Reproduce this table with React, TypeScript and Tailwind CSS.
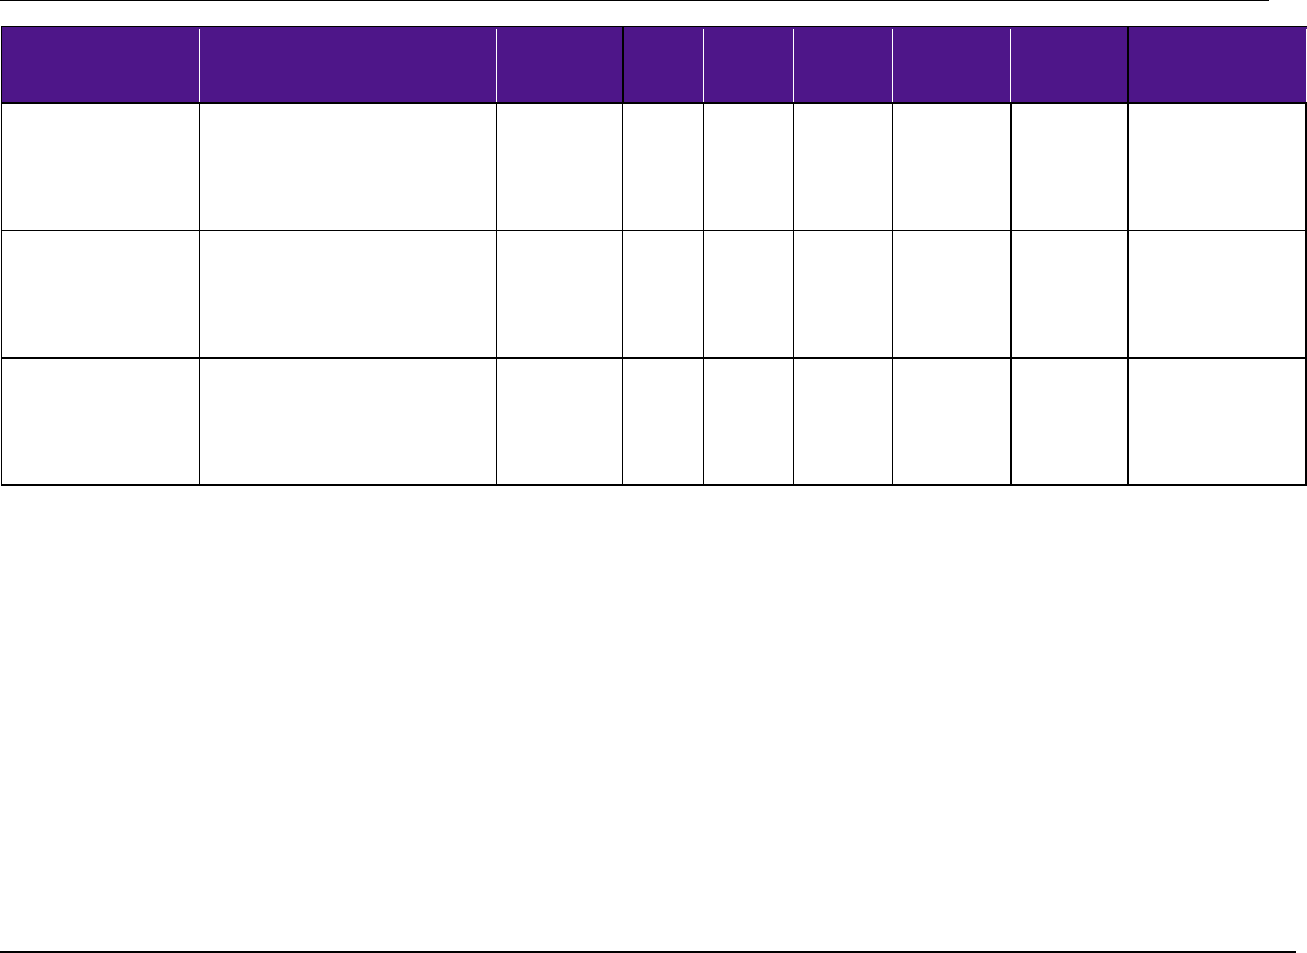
import React from 'react';

type Col = { w: string; head: 'white' | 'black' | 'none'; body: string };

// widths include the left rule of each column
const cols: Col[] = [
  { w: 'w-[198px]', head: 'none', body: 'border-l' },
  { w: 'w-[297px]', head: 'white', body: 'border-l' },
  { w: 'w-[126px]', head: 'white', body: 'border-l' },
  { w: 'w-[81px]', head: 'black', body: 'border-l' },
  { w: 'w-[90px]', head: 'white', body: 'border-l' },
  { w: 'w-[99px]', head: 'white', body: 'border-l' },
  { w: 'w-[118px]', head: 'white', body: 'border-l' },
  { w: 'w-[117px]', head: 'white', body: 'border-l-2' },
  { w: 'w-[180px]', head: 'black', body: 'border-l-2 border-r-2' },
];

function HeaderRow() {
  return (
    <div className="flex h-[78px] border-t border-b-2 border-black">
      {cols.map((c, i) => (
        <div
          key={i}
          className={`${c.w} flex shrink-0 bg-[#4e1689] ${
            i === 0 ? 'border-l border-black' : ''
          } ${c.head === 'black' ? 'border-l-2 border-black' : ''}`}
        >
          {c.head === 'white' && <div className="mt-[2px] w-px bg-white" />}
          {i === cols.length - 1 && <div className="ml-auto mt-[2px] w-px bg-white" />}
        </div>
      ))}
    </div>
  );
}

function BodyRow({ h, bottom }: { h: string; bottom: string }) {
  return (
    <div className={`flex ${h} ${bottom} border-black`}>
      {cols.map((c, i) => (
        <div key={i} className={`${c.w} shrink-0 ${c.body} border-black bg-white`} />
      ))}
    </div>
  );
}

export default function App() {
  return (
    <div className="h-[953px] w-[1307px] overflow-hidden bg-white font-['Liberation_Sans',Arial,sans-serif]">
      <div className="h-px w-[1269px] bg-black" />
      <div className="ml-px mt-[25px] w-[1306px]">
        <HeaderRow />
        <BodyRow h="h-[127px]" bottom="border-b" />
        <BodyRow h="h-[128px]" bottom="border-b-2" />
        <BodyRow h="h-[127px]" bottom="border-b-2" />
      </div>
      <div className="mt-[465px] h-[2px] w-[1296px] bg-black" />
    </div>
  );
}
